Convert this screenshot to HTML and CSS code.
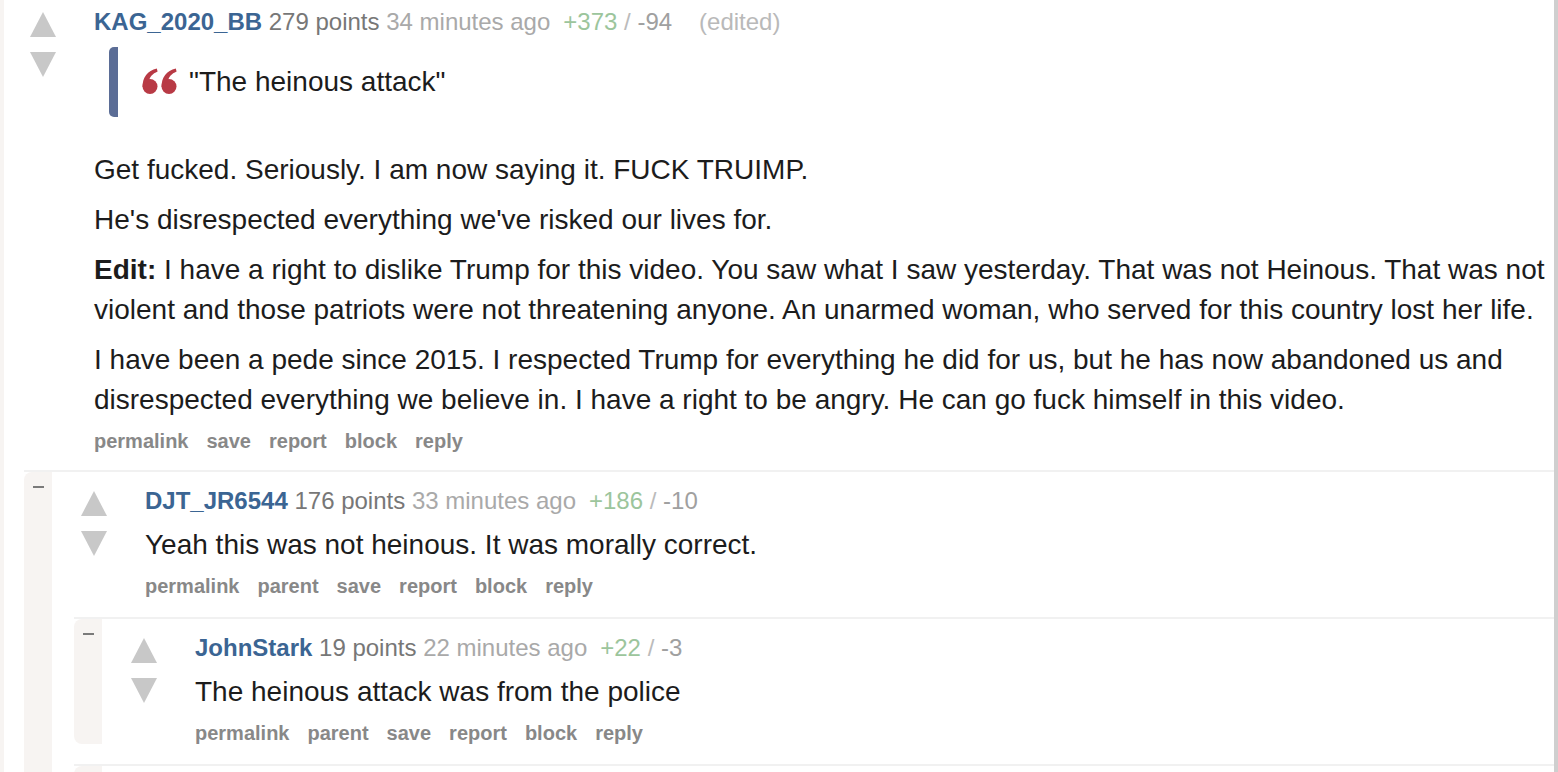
FILE: index.html
```html
<!DOCTYPE html>
<html>
<head>
<meta charset="utf-8">
<link rel="stylesheet" href="styles.css">
</head>
<body>
<div class="page">
  <div class="comment root">
    <div class="gutter"></div>
    <div class="main">
      <div class="row">
        <div class="vote">
          <span class="arrow up"></span>
          <span class="arrow down"></span>
        </div>
        <div class="entry">
          <div class="tagline">
            <a class="author">KAG_2020_BB</a> <span class="score">279 points</span> <span class="time">34 minutes ago</span><span class="updown"><span class="ups">+373</span> <span class="sep">/</span> <span class="downs">-94</span></span><span class="edited">(edited)</span>
          </div>
          <div class="md">
            <blockquote class="quote">
              <svg class="qmark" viewBox="0 0 35 26" width="35" height="26" aria-hidden="true">
                <g fill="#b83a45">
                  <circle cx="8" cy="18.5" r="7.5"/>
                  <path d="M0.6 19 C0.4 9.5 5.5 3 14.8 0.6 L15.6 3.4 C10.5 5.6 7.6 9 7.2 12.4 Z"/>
                  <circle cx="27" cy="18.5" r="7.5"/>
                  <path d="M19.6 19 C19.4 9.5 24.5 3 33.8 0.6 L34.6 3.4 C29.5 5.6 26.6 9 26.2 12.4 Z"/>
                </g>
              </svg>
              <span>"The heinous attack"</span>
            </blockquote>
            <p>Get fucked. Seriously. I am now saying it. FUCK TRUIMP.</p>
            <p>He's disrespected everything we've risked our lives for.</p>
            <p><strong>Edit:</strong> I have a right to dislike Trump for this video. You saw what I saw yesterday. That was not Heinous. That was not violent and those patriots were not threatening anyone. An unarmed woman, who served for this country lost her life.</p>
            <p>I have been a pede since 2015. I respected Trump for everything he did for us, but he has now abandoned us and disrespected everything we believe in. I have a right to be angry. He can go fuck himself in this video.</p>
          </div>
          <ul class="buttons">
            <li>permalink</li><li>save</li><li>report</li><li>block</li><li>reply</li>
          </ul>
        </div>
      </div>
      <div class="children">
        <div class="comment">
          <div class="gutter"><span class="collapse"></span></div>
          <div class="main">
            <div class="row">
              <div class="vote">
                <span class="arrow up"></span>
                <span class="arrow down"></span>
              </div>
              <div class="entry">
                <div class="tagline">
                  <a class="author">DJT_JR6544</a> <span class="score">176 points</span> <span class="time">33 minutes ago</span><span class="updown"><span class="ups">+186</span> <span class="sep">/</span> <span class="downs">-10</span></span>
                </div>
                <div class="md">
                  <p>Yeah this was not heinous. It was morally correct.</p>
                </div>
                <ul class="buttons">
                  <li>permalink</li><li>parent</li><li>save</li><li>report</li><li>block</li><li>reply</li>
                </ul>
              </div>
            </div>
            <div class="children">
              <div class="comment">
                <div class="gutter"><span class="collapse"></span></div>
                <div class="main">
                  <div class="row">
                    <div class="vote">
                      <span class="arrow up"></span>
                      <span class="arrow down"></span>
                    </div>
                    <div class="entry">
                      <div class="tagline">
                        <a class="author">JohnStark</a> <span class="score">19 points</span> <span class="time">22 minutes ago</span><span class="updown"><span class="ups">+22</span> <span class="sep">/</span> <span class="downs">-3</span></span>
                      </div>
                      <div class="md">
                        <p>The heinous attack was from the police</p>
                      </div>
                      <ul class="buttons">
                        <li>permalink</li><li>parent</li><li>save</li><li>report</li><li>block</li><li>reply</li>
                      </ul>
                    </div>
                  </div>
                </div>
              </div>
              <div class="comment placeholder">
                <div class="gutter"></div>
                <div class="main"></div>
              </div>
            </div>
          </div>
        </div>
      </div>
    </div>
  </div>
</div>
</body>
</html>
```
FILE: styles.css
```css
html, body {
  margin: 0;
  padding: 0;
  background: #ffffff;
}
body {
  font-family: "Liberation Sans", Arial, Helvetica, sans-serif;
  color: #1c1c1c;
  overflow: hidden;
}
.page {
  width: 1554px;
  height: 772px;
  border-right: 4px solid #cfcfcf;
  overflow: hidden;
  background: #fff;
}
.comment {
  display: flex;
  align-items: stretch;
  border-top: 2px solid #f1f1f1;
}
.comment.root {
  border-top: none;
}
.comment.placeholder {
  height: 40px;
}
.gutter {
  flex: 0 0 28px;
  background: #f7f4f2;
  border-radius: 8px 0 0 8px;
  position: relative;
}
.root > .gutter {
  flex-basis: 4px;
  border-radius: 0;
}
.collapse {
  position: absolute;
  left: 9px;
  top: 14px;
  width: 11px;
  height: 2px;
  background: #7a7a7a;
}
.main {
  flex: 1;
  min-width: 0;
}
.row {
  display: flex;
  padding-top: 15px;
}
.root > .main > .row {
  padding-top: 8px;
}
.vote {
  flex: 0 0 26px;
  padding-left: 29px;
  padding-top: 4px;
  margin-right: 38px;
  display: flex;
  flex-direction: column;
  gap: 15px;
}
.root > .main > .row > .vote {
  padding-left: 26px;
  margin-right: 38px;
}
.arrow {
  display: block;
  width: 0;
  height: 0;
  border-left: 13px solid transparent;
  border-right: 13px solid transparent;
}
.arrow.up {
  border-bottom: 25px solid #c8c8c8;
}
.arrow.down {
  border-top: 25px solid #c8c8c8;
}
.entry {
  flex: 1;
  min-width: 0;
}
.tagline {
  font-size: 24px;
  line-height: 28px;
  color: #777;
  white-space: nowrap;
}
.author {
  color: #3b6593;
  font-weight: bold;
}
.score {
  color: #777;
}
.time {
  color: #a9a9a9;
}
.updown {
  margin-left: 13px;
}
.ups {
  color: #9cc59c;
}
.sep {
  color: #bbbbbb;
}
.downs {
  color: #a0a0a0;
}
.edited {
  margin-left: 27px;
  color: #b9b9b9;
}
.md {
  font-size: 28px;
  line-height: 40px;
  color: #1c1c1c;
}
.md p {
  margin: 10px 0 0 0;
}
.quote {
  margin: 11px 0 33px 15px;
  padding: 15px 0 15px 24px;
  border-left: 9px solid #5b6d96;
  border-radius: 5px;
  display: flex;
  align-items: center;
  gap: 12px;
}
.qmark {
  flex: 0 0 auto;
  margin-top: -2px;
}
.quote + p {
  margin-top: 0;
}
.buttons {
  list-style: none;
  margin: 10px 0 0 0;
  padding: 0;
  display: flex;
  gap: 18px;
  font-size: 20px;
  line-height: 22px;
  font-weight: bold;
  color: #888;
}
.children {
  margin-top: 20px;
  margin-left: 22px;
  display: flex;
  flex-direction: column;
  gap: 20px;
}
.root > .main > .children {
  margin-top: 18px;
  margin-left: 20px;
}
```
